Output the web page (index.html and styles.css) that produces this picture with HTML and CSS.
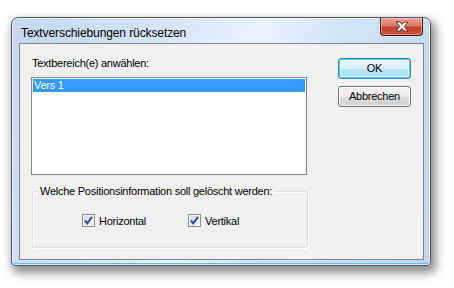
FILE: index.html
```html
<!DOCTYPE html>
<html>
<head>
<meta charset="utf-8">
<link rel="stylesheet" href="styles.css">
</head>
<body>
<div class="window">
  <div class="titlebar">
    <span class="title">Textverschiebungen rücksetzen</span>
    <div class="close">
      <svg width="16" height="11" viewBox="0 0 16 11"><path d="M2 1 H6 L8 3.5 L10 1 H14 L10.2 5.5 L14 10 H10 L8 7.5 L6 10 H2 L5.8 5.5 Z" fill="#fff" stroke="#5b2118" stroke-width="0.9" stroke-linejoin="round"/></svg>
    </div>
  </div>
  <div class="client">
    <div class="left">
      <div class="label">Textbereich(e) anwählen:</div>
      <div class="listbox">
        <div class="item selected">Vers 1</div>
      </div>
      <div class="group">
        <div class="legend">Welche Positionsinformation soll gelöscht werden:</div>
        <div class="checks">
          <label class="check"><span class="box"><svg width="11" height="11" viewBox="0 0 11 11"><path d="M2 5.5 L4.3 8.3 L9 1.8" fill="none" stroke="#2a4fa8" stroke-width="2"/></svg></span>Horizontal</label>
          <label class="check"><span class="box"><svg width="11" height="11" viewBox="0 0 11 11"><path d="M2 5.5 L4.3 8.3 L9 1.8" fill="none" stroke="#2a4fa8" stroke-width="2"/></svg></span>Vertikal</label>
        </div>
      </div>
    </div>
    <div class="right">
      <div class="btn default">OK</div>
      <div class="btn">Abbrechen</div>
    </div>
  </div>
</div>
</body>
</html>
```
FILE: styles.css
```css
html, body { margin: 0; padding: 0; background: #ffffff; }
body { width: 454px; height: 288px; overflow: hidden; font-family: "Liberation Sans", Arial, sans-serif; font-size: 11px; letter-spacing: -0.25px; color: #000; }

.window {
  margin: 17px 0 0 11px;
  width: 418px;
  height: 247px;
  border: 1px solid #4e5560;
  border-radius: 7px 7px 4px 4px;
  background: linear-gradient(110deg, #c3d7ef 0%, #d9e7f7 35%, #e9f2fc 50%, #d2e3f6 65%, #bfd5ee 100%);
  box-shadow: 3px 5px 10px 2px rgba(0,0,0,0.45), inset 0 0 0 1px rgba(255,255,255,0.7), inset 0 -2px 0 #5cc2ec;
  display: flex;
  flex-direction: column;
}

.titlebar {
  height: 25px;
  display: flex;
  justify-content: space-between;
  align-items: flex-start;
  padding: 0 7px 0 9px;
}
.title { font-size: 12px; margin-top: 8px; color: #000; letter-spacing: -0.1px; }
.close {
  width: 41px;
  height: 17px;
  border: 1px solid #4a1f1a;
  border-top: none;
  border-radius: 0 0 4px 4px;
  background: linear-gradient(#eaa595 0%, #d97763 45%, #c23f2a 55%, #c95741 100%);
  box-shadow: inset 0 0 0 1px rgba(255,255,255,0.35);
  display: flex;
  align-items: center;
  justify-content: center;
}

.client {
  margin: 0 6px 5px 7px;
  flex: 1;
  background: #f0f0f0;
  border: 1px solid #7d8690;
  display: flex;
  padding: 13px 0 0 11px;
  gap: 30px;
}

.left { width: 277px; display: flex; flex-direction: column; }
.label { height: 13px; line-height: 13px; padding-left: 1px; margin-bottom: 7px; }
.listbox {
  width: 272px;
  height: 94px;
  background: #fff;
  border: 1px solid #828790;
  padding: 1px;
}
.item { height: 13px; line-height: 13px; padding-left: 1px; }
.item.selected { background: #3399ff; color: #fff; }

.group {
  margin-top: 16px;
  margin-left: 1px;
  width: 274px;
  height: 55px;
  border: 1px solid #d5dfe5;
  border-radius: 3px;
  box-shadow: inset 1px 1px 0 #fff, 1px 1px 0 #fff;
  display: flex;
  flex-direction: column;
}
.legend {
  align-self: flex-start;
  margin: -7px 0 0 6px;
  padding: 0 2px 0 1px;
  background: #f0f0f0;
  line-height: 13px;
  height: 13px;
}
.checks { display: flex; margin: 16px 0 0 49px; }
.check { display: flex; align-items: center; height: 13px; }
.check + .check { margin-left: 42px; }
.box {
  width: 11px;
  height: 11px;
  border: 1px solid #8e8f8f;
  background: linear-gradient(135deg, #d7d7d7, #f7f7f7);
  box-shadow: inset 0 0 0 1px #f4f4f4;
  margin-right: 4px;
  display: flex;
}

.right { display: flex; flex-direction: column; gap: 7px; padding-top: 1px; }
.btn {
  width: 71px;
  height: 19px;
  border: 1px solid #707070;
  border-radius: 3px;
  background: linear-gradient(#f2f2f2 0%, #ebebeb 50%, #dddddd 51%, #cfcfcf 100%);
  box-shadow: inset 0 0 0 1px rgba(255,255,255,0.8);
  display: flex;
  align-items: center;
  justify-content: center;
  line-height: 13px;
}
.btn.default {
  border-color: #3c7fb1;
  background: linear-gradient(#eaf6fd 0%, #d9f0fc 50%, #bee6fd 51%, #a7d9f5 100%);
  box-shadow: inset 0 0 0 1px #48d1fb, inset 0 0 0 2px rgba(255,255,255,0.5);
}
```
